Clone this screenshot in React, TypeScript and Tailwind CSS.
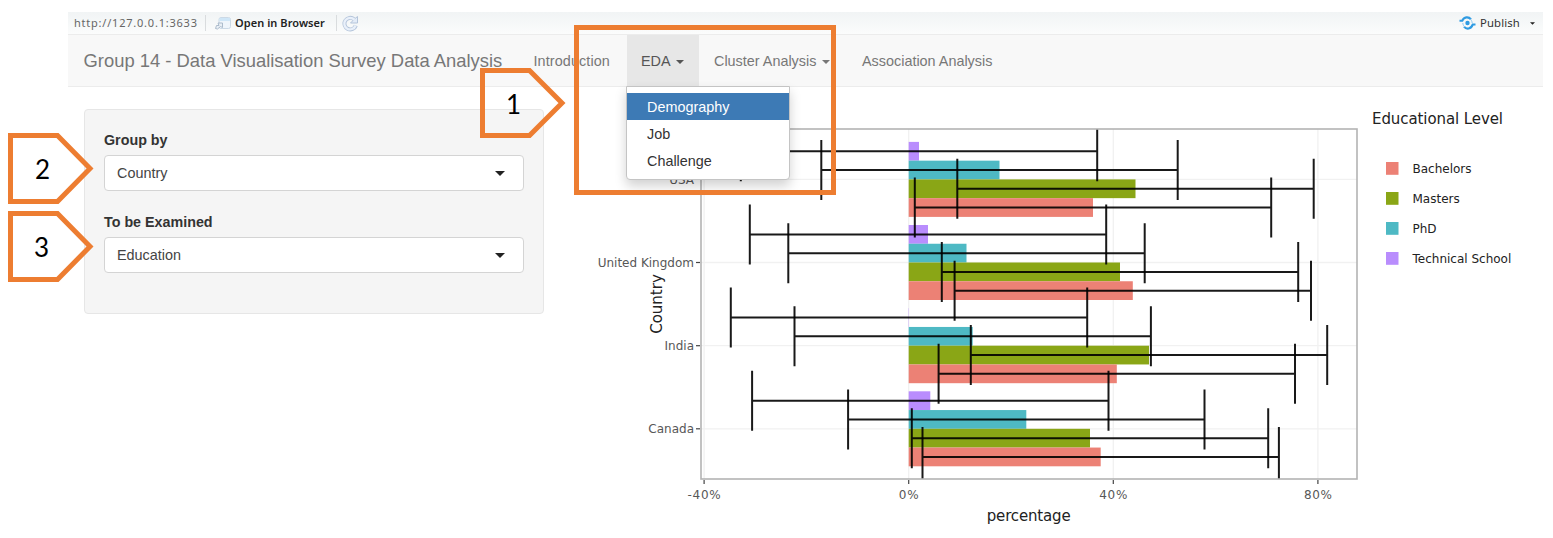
import type { ReactNode } from "react";

const ZERO_X = 908.7;
const PER_PERCENT = 5.115;
const BAR = 18.75;
const ERROR = 178.2;
const CAP = 30;

const levels = [
  { name: "Technical School", color: "#b98dfd" },
  { name: "PhD", color: "#4eb9c4" },
  { name: "Masters", color: "#8aa616" },
  { name: "Bachelors", color: "#ec8175" },
];

const countries = [
  { name: "USA", y: 179.4, ends: [919, 999.5, 1135.5, 1093] },
  { name: "United Kingdom", y: 262.5, ends: [928, 966.5, 1120, 1132.8] },
  { name: "India", y: 345.7, ends: [909, 972.7, 1149, 1116.8] },
  { name: "Canada", y: 428.8, ends: [930.3, 1026.3, 1090, 1100.7] },
];

const ticks = [-40, 0, 40, 80];
const legend = ["Bachelors", "Masters", "PhD", "Technical School"];

function Chart() {
  const x = (p: number) => ZERO_X + p * PER_PERCENT;
  return (
    <svg
      className="block h-[450px] w-[953px] shrink-0 font-['DejaVu_Sans',sans-serif]"
      viewBox="590 88 953 450"
    >
      <defs>
        <clipPath id="plot">
          <rect x="701" y="129" width="656" height="350" />
        </clipPath>
      </defs>
      <g stroke="#f1f1f1" strokeWidth="1.3">
        {ticks.map((t) => (
          <line key={t} x1={x(t)} x2={x(t)} y1="129" y2="479" />
        ))}
        {countries.map((c) => (
          <line key={c.name} x1="701" x2="1357" y1={c.y} y2={c.y} />
        ))}
      </g>
      {countries.map((c) =>
        c.ends.map((end, i) => (
          <rect
            key={c.name + i}
            x={ZERO_X}
            y={c.y + (i - 2) * BAR}
            width={end - ZERO_X}
            height={BAR}
            fill={levels[i].color}
          />
        )),
      )}
      <g clipPath="url(#plot)" stroke="#000" strokeOpacity="0.9" strokeWidth="2" fill="none">
        {countries.map((c) =>
          c.ends.map((end, i) => {
            const y = c.y + (i - 1.5) * BAR;
            const l = end - ERROR;
            const r = end + ERROR;
            return (
              <path
                key={c.name + i}
                d={`M${l} ${y - CAP}V${y + CAP}M${l} ${y}H${r}M${r} ${y - CAP}V${y + CAP}`}
              />
            );
          }),
        )}
      </g>
      <rect x="701" y="129" width="656" height="350" fill="none" stroke="#b3b3b3" strokeWidth="1.6" />
      <g stroke="#444" strokeWidth="1.2">
        {ticks.map((t) => (
          <line key={t} x1={x(t)} x2={x(t)} y1="480" y2="484" />
        ))}
        {countries.map((c) => (
          <line key={c.name} x1="696" x2="700" y1={c.y} y2={c.y} />
        ))}
      </g>
      <g fill="#575757" fontSize="12">
        {countries.map((c) => (
          <text key={c.name} x="694" y={c.y + 4.1} textAnchor="end">
            {c.name}
          </text>
        ))}
        {ticks.map((t) => (
          <text
            key={t}
            x={x(t)}
            y="498.500"
            textAnchor="middle"
            textLength={t < 0 ? 33 : t === 0 ? 20 : 28}
          >
            {t}%
          </text>
        ))}
      </g>
      <g fill="#222" fontSize="15">
        <text x="1028.7" y="520.5" textAnchor="middle" textLength="84">
          percentage
        </text>
        <text transform="translate(661.5 304) rotate(-90)" textAnchor="middle">
          Country
        </text>
        <text x="1372" y="124" textLength="131">
          Educational Level
        </text>
      </g>
      <g fill="#222" fontSize="12">
        {legend.map((name, i) => (
          <g key={name}>
            <rect x="1386" y={162 + i * 30} width="12.5" height="12.8" fill={levels[3 - i].color} />
            <text x="1412.5" y={173 + i * 30}>
              {name}
            </text>
          </g>
        ))}
      </g>
    </svg>
  );
}

function Caret({ className }: { className: string }) {
  return (
    <svg className={className} viewBox="0 0 10 5">
      <path d="M0 0H10L5 5Z" fill="currentColor" />
    </svg>
  );
}

function Toolbar() {
  return (
    <div className="flex h-[22px] items-center bg-gradient-to-b from-[#f1f4f5] to-[#fbfcfc] pl-1.5 pr-2 font-['Noto_Sans',sans-serif] text-[11px]">
      <span className="w-[131px] whitespace-nowrap text-[#666] tracking-[0.78px]">http://127.0.0.1:3633</span>
      <span className="mr-2 h-4 w-px bg-[#d9dcde]" />
      <svg className="h-[15px] w-[18px]" viewBox="0 0 18 15">
        <rect x="5" y="1.5" width="11.5" height="11" rx="2" fill="#eff5fb" stroke="#cbd9e6" />
        <path d="M5.5 2h10.500v3h-10.500z" fill="#cfe6f7" />
        <path d="M1.500 12.500L2.500 9.500L5 9.500L4 7H8.500V11.500L6.500 10.500L3.500 13Z" fill="#e9eff5" stroke="#a5b6c7" strokeWidth=".9" />
      </svg>
      <span className="ml-[3px] w-[101px] whitespace-nowrap font-semibold tracking-[0.06px] text-[#222]">Open in Browser</span>
      <span className="mr-[5px] h-4 w-px bg-[#d9dcde]" />
      <svg className="h-[17px] w-[17px]" viewBox="0 0 17 17" fill="none">
        <path d="M13.800 10.500A5.800 5.800 0 1 1 12 4.200" stroke="#b4c4da" strokeWidth="4" />
        <path d="M15.500 1.500V8H8.500L11 5.500L12.500 4Z" fill="#e3ecf8" stroke="#b4c4da" />
        <path d="M13.600 10.500A5.800 5.800 0 1 1 12.500 4.800" stroke="#e9f0fa" strokeWidth="2.300" />
      </svg>
      <svg className="ml-auto h-[14px] w-[17px]" viewBox="0 0 17 14" fill="none">
        <path d="M.5 4.800H3.200C5 .8 9.500 .2 12 3.400" stroke="#2f9be2" strokeWidth="2.100" />
        <path d="M16.500 8.500H13.800C12 13.200 7.500 13.800 5 10.600" stroke="#2f9be2" strokeWidth="2.100" />
        <path d="M3.800 7C4 9 5 10.500 6 11M13.200 7C13 5 12 3.500 11 3" stroke="#8cc8f1" strokeWidth="1" />
        <circle cx="8.500" cy="7" r="2.200" fill="#2f9be2" />
      </svg>
      <span className="ml-1 text-[11.3px] tracking-[0.15px] text-[#333]">Publish</span>
      <Caret className="ml-2.5 h-[3px] w-[5px] text-[#222]" />
    </div>
  );
}

function NavBar() {
  return (
    <nav className="flex h-[53px] border-y border-[#ececec] bg-[#f8f8f8] text-[14.4px] text-[#777]">
      <div className="flex w-[450px] items-center whitespace-nowrap pl-[15.5px] pt-px text-[18.4px]">
        Group 14 - Data Visualisation Survey Data Analysis
      </div>
      <div className="flex w-[109px] items-center pl-[15.5px] pt-0.5 tracking-[0.1px]">Introduction</div>
      <div className="relative flex w-[72px] items-center bg-[#e7e7e7] pl-[14px] pt-0.5 text-[#555]">
        EDA
        <Caret className="ml-[5px] h-1 w-2" />
        <div className="absolute left-[-1px] top-[51px] z-10 flex h-[94px] w-[164px] flex-col rounded-b border border-[#c4c4c4] bg-white pt-[6px] text-[#333] shadow-[0_6px_12px_rgba(0,0,0,0.18)]">
          <div className="flex h-[27px] items-center bg-[#3d7ab5] pl-5 pt-0.5 text-white">Demography</div>
          <div className="flex h-[27px] items-center pl-5 pt-0.5">Job</div>
          <div className="flex h-[27px] items-center pl-5 pt-0.5">Challenge</div>
        </div>
      </div>
      <div className="flex w-[148px] items-center whitespace-nowrap pl-[15px] pt-0.5">
        Cluster Analysis
        <Caret className="ml-1.5 h-1 w-2" />
      </div>
      <div className="flex items-center whitespace-nowrap pl-[15px] pt-0.5">Association Analysis</div>
    </nav>
  );
}

function Field({ label, value }: { label: string; value: string }) {
  return (
    <div className="h-[82px]">
      <div className="flex h-[25px] items-start text-[14.3px] font-bold leading-[20px] text-[#333]">{label}</div>
      <div className="flex h-[36px] items-center justify-between rounded border border-[#d4d4d4] bg-white pl-3 pr-[18px] text-[14.4px] text-[#444]">
        <span className="pt-0.5">{value}</span>
        <Caret className="h-[5px] w-[10px] text-[#222]" />
      </div>
    </div>
  );
}

function Callout({ className, children }: { className: string; children: ReactNode }) {
  return (
    <div className={className}>
      <svg className="absolute inset-0 h-full w-full" viewBox="0 0 86 71" preserveAspectRatio="none">
        <path d="M2.500 2.500H49.500L82 35.500L49.500 68.500H2.500Z" fill="none" stroke="#ed7d31" strokeWidth="5" />
      </svg>
      <span className="relative">{children}</span>
    </div>
  );
}

export default function App() {
  return (
    <div className="relative h-[538px] w-[1553px] overflow-hidden bg-white pl-[68px] pr-[10px] pt-3 font-['Liberation_Sans',Arial,sans-serif]">
      <Toolbar />
      <NavBar />
      <main className="flex pl-4">
        <section className="mt-[22px] h-[205px] w-[460px] shrink-0 rounded border border-[#e6e6e6] bg-[#f5f5f5] px-[19px] pt-[20px]">
          <Field label="Group by" value="Country" />
          <Field label="To be Examined" value="Education" />
        </section>
        <div className="ml-[46px] mt-px">
          <Chart />
        </div>
      </main>
      <div className="absolute left-[574px] top-[25px] z-20 h-[170px] w-[262px] border-[5px] border-[#ed7d31]" />
      <Callout className="absolute left-[480px] top-[68px] z-20 flex h-[70px] w-[86px] items-center pl-[26px] pt-0.5 font-['Lato',sans-serif] text-[26px] text-black">
        1
      </Callout>
      <Callout className="absolute left-[8px] top-[133px] z-20 flex h-[71px] w-[86px] items-center pl-[27px] pt-0.5 font-['Lato',sans-serif] text-[26px] text-black">
        2
      </Callout>
      <Callout className="absolute left-[8px] top-[211px] z-20 flex h-[71px] w-[86px] items-center pl-[26px] pt-0.5 font-['Lato',sans-serif] text-[26px] text-black">
        3
      </Callout>
    </div>
  );
}
